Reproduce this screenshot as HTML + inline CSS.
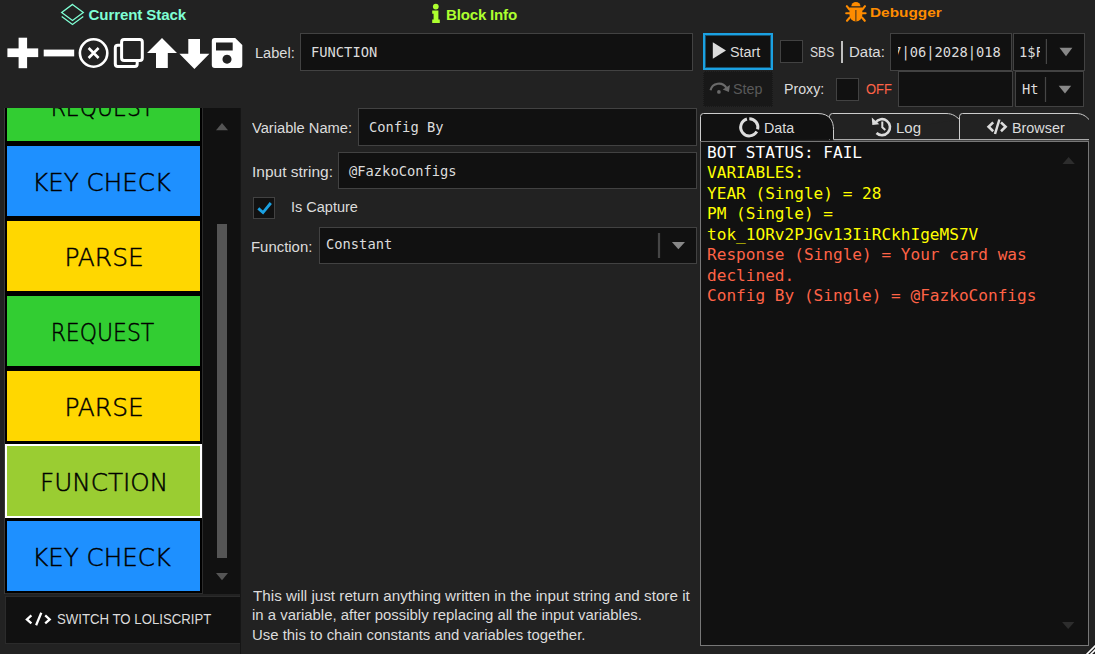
<!DOCTYPE html>
<html lang="en">
<head>
<meta charset="utf-8">
<title>Stacker</title>
<style>
html,body{margin:0;padding:0;}
body{width:1095px;height:654px;overflow:hidden;background:#222;position:relative;
  font-family:"Liberation Sans",sans-serif;color:#dcdcdc;}
.abs{position:absolute;white-space:nowrap;}
.ui{z-index:3;position:absolute;white-space:nowrap;font-family:"Liberation Sans",sans-serif;font-size:15.3px;line-height:20px;color:#dcdcdc;}
.mono{position:absolute;white-space:nowrap;font-family:"DejaVu Sans Mono","Liberation Mono",monospace;font-size:13.75px;line-height:20px;color:#dcdcdc;}
.field{position:absolute;background:#111;border:1px solid #424242;box-sizing:border-box;overflow:hidden;}
.title{position:absolute;white-space:nowrap;font-weight:bold;font-size:15.1px;line-height:20px;}
svg{position:absolute;left:0;top:0;overflow:visible;pointer-events:none;z-index:2;}
#list{position:absolute;left:4px;top:108px;width:237px;height:486px;background:#111;overflow:hidden;border-left:1px solid #3a3a3a;box-sizing:border-box;}
#listin{position:absolute;left:0;top:0;width:197px;height:485px;background:#000;overflow:hidden;border-right:1px solid #2c2c2c;border-bottom:1px solid #2c2c2c;}
.blk{position:absolute;left:0;width:193px;height:70px;border:2px solid #000;color:#000;
  font-family:"DejaVu Sans","Liberation Sans",sans-serif;font-weight:200;font-size:23.9px;line-height:70px;text-align:center;-webkit-text-stroke:0.45px #000;}
.blk span{display:inline-block;position:relative;top:2px;transform:scaleX(0.87);transform-origin:50% 50%;}
.sel{border-color:#fff;}
#log{position:absolute;left:700px;top:141px;width:389px;height:505px;box-sizing:border-box;background:#111;border:1px solid #777;overflow:hidden;}
#log div{position:absolute;left:6px;white-space:nowrap;font-family:"DejaVu Sans Mono","Liberation Mono",monospace;font-size:16.1px;line-height:20.4px;}
</style>
</head>
<body>
<div class="title" id="t1" style="left:88.5px;top:4.8px;color:#7fffd4;letter-spacing:-0.11px;">Current Stack</div>
<div class="title" id="t2" style="left:446px;top:4.8px;color:#adff2f;letter-spacing:-0.2px;">Block Info</div>
<div class="title" id="t3" style="left:870.3px;top:2.5px;color:#ff8c00;font-size:13.6px;transform:scaleX(1.13);transform-origin:0 50%;">Debugger</div>
<div class="field" style="left:300px;top:33px;width:393px;height:38px;"><div class="mono" id="lblv" style="left:10px;top:8.2px;">FUNCTION</div></div>
<div id="list"><div id="listin">
<div class="blk" style="top:-39px;background:#32cd32;"><span style="transform:scaleX(0.918);left:-0.6px;">REQUEST</span></div>
<div class="blk" style="top:36px;background:#1e90ff;"><span style="transform:scaleX(1.027);left:-1.6px;">KEY CHECK</span></div>
<div class="blk" style="top:111px;background:#ffd700;"><span style="transform:scaleX(1.04);left:0.3px;">PARSE</span></div>
<div class="blk" style="top:186px;background:#32cd32;"><span style="transform:scaleX(0.918);left:-0.6px;">REQUEST</span></div>
<div class="blk" style="top:261px;background:#ffd700;"><span style="transform:scaleX(1.04);left:0.3px;">PARSE</span></div>
<div class="blk sel" style="top:336px;background:#9acd32;"><span style="transform:scaleX(1.032);left:0.5px;">FUNCTION</span></div>
<div class="blk" style="top:411px;background:#1e90ff;"><span style="transform:scaleX(1.027);left:-1.6px;">KEY CHECK</span></div>
</div>
<div class="abs" style="left:212px;top:116px;width:10px;height:334px;background:#555;"></div>
</div>
<div class="field" style="left:5px;top:596px;width:236px;height:48px;border-color:#2b2b2b;"></div>
<div class="abs" style="left:240px;top:108px;width:1px;height:546px;background:#151515;"></div>
<div class="field" style="left:358px;top:108px;width:339px;height:38px;"><div class="mono" id="vnv" style="left:10px;top:8.2px;">Config By</div></div>
<div class="field" style="left:338px;top:152px;width:359px;height:37px;"><div class="mono" id="isv" style="left:10px;top:8.2px;">@FazkoConfigs</div></div>
<div class="field" style="left:253px;top:197px;width:22px;height:22px;"></div>
<div class="field" style="left:319px;top:227px;width:378px;height:37px;"><div class="mono" id="fnv" style="left:6px;top:6px;">Constant</div></div>
<div class="field" style="left:703px;top:33px;width:70px;height:37px;border:2px solid #1ba1e2;box-shadow:inset 0 0 0 1px rgba(27,161,226,0.45);"></div>
<div class="field" style="left:703px;top:71px;width:70px;height:36px;background:#181818;border:1px dotted #232323;"></div>
<div class="field" style="left:780px;top:40px;width:23px;height:23px;"></div>
<div class="abs" style="left:841px;top:41px;width:2px;height:22px;background:#c0c0c0;"></div>
<div class="field" style="left:890px;top:33px;width:122px;height:38px;"><div class="abs" style="left:7px;top:0;width:107px;height:36px;overflow:hidden;"><div class="mono" id="dv" style="left:-4.8px;top:8.2px;">7|06|2028|018</div></div></div>
<div class="field" style="left:1013px;top:33px;width:72px;height:38px;"><div class="mono" style="left:5px;top:8.2px;width:21px;overflow:hidden;">1$F</div></div>
<div class="field" style="left:836px;top:78px;width:23px;height:23px;"></div>
<div class="field" style="left:898px;top:71px;width:115px;height:36px;"></div>
<div class="field" style="left:1015px;top:71px;width:69px;height:36px;"><div class="mono" style="left:6px;top:7px;">Ht</div></div>
<div id="log">
<div style="top:0.5px;color:#fff;">BOT STATUS: FAIL</div>
<div style="top:21.05px;color:#ff0;">VARIABLES:</div>
<div style="top:41.6px;color:#ff0;">YEAR (Single) = 28</div>
<div style="top:62.15px;color:#ff0;">PM (Single) =</div>
<div style="top:82.7px;color:#ff0;">tok_1ORv2PJGv13IiRCkhIgeMS7V</div>
<div style="top:103.25px;color:#ff6347;">Response (Single) = Your card was</div>
<div style="top:123.8px;color:#ff6347;">declined.</div>
<div style="top:144.35px;color:#ff6347;">Config By (Single) = @FazkoConfigs</div>
</div>
<div class="ui" id="lbl" style="left:255.00px;top:42.6px;transform:scaleX(0.9548);transform-origin:0 50%;">Label:</div>
<div class="ui" id="vn" style="left:252.42px;top:117.9px;transform:scaleX(0.9598);transform-origin:0 50%;">Variable Name:</div>
<div class="ui" id="is" style="left:252.00px;top:161.9px;transform:scaleX(1.0128);transform-origin:0 50%;">Input string:</div>
<div class="ui" id="ic" style="left:290.86px;top:197.1px;transform:scaleX(0.9485);transform-origin:0 50%;">Is Capture</div>
<div class="ui" id="fn" style="left:251.30px;top:236.6px;transform:scaleX(0.9752);transform-origin:0 50%;">Function:</div>
<div class="ui" id="st" style="left:729.66px;top:41.6px;transform:scaleX(0.9354);transform-origin:0 50%;">Start</div>
<div class="ui" id="sp" style="left:733.00px;top:79px;transform:scaleX(0.9333);transform-origin:0 50%;color:#5a5a5a;">Step</div>
<div class="ui" id="sbs" style="left:809.68px;top:41.6px;transform:scaleX(0.7935);transform-origin:0 50%;">SBS</div>
<div class="ui" id="dl" style="left:849.00px;top:41.6px;transform:scaleX(0.9798);transform-origin:0 50%;">Data:</div>
<div class="ui" id="px" style="left:784.00px;top:78.6px;transform:scaleX(0.9286);transform-origin:0 50%;">Proxy:</div>
<div class="ui" id="off" style="left:866.00px;top:78.6px;transform:scaleX(0.8500);transform-origin:0 50%;color:#ff6347;">OFF</div>
<div class="ui" id="td" style="left:763.92px;top:117.9px;transform:scaleX(0.9341);transform-origin:0 50%;">Data</div>
<div class="ui" id="tl" style="left:896.35px;top:117.9px;transform:scaleX(0.9815);transform-origin:0 50%;">Log</div>
<div class="ui" id="tb" style="left:1012.42px;top:117.9px;transform:scaleX(0.9392);transform-origin:0 50%;">Browser</div>
<div class="ui" id="sw" style="left:57.00px;top:609.1px;transform:scaleX(0.8637);transform-origin:0 50%;">SWITCH TO LOLISCRIPT</div>
<div class="ui" id="d1" style="left:252.60px;top:585.6px;transform:scaleX(0.9955);transform-origin:0 50%;">This will just return anything written in the input string and store it</div>
<div class="ui" id="d2" style="left:252.45px;top:605.1px;transform:scaleX(0.9754);transform-origin:0 50%;">in a variable, after possibly replacing all the input variables.</div>
<div class="ui" id="d3" style="left:252.14px;top:624.6px;transform:scaleX(0.9754);transform-origin:0 50%;">Use this to chain constants and variables together.</div>
<svg width="1095" height="654" viewBox="0 0 1095 654">
<!-- toolbar -->
<g fill="#fff">
<rect x="18.6" y="37.7" width="8.5" height="30.5"/><rect x="7.4" y="48.4" width="30.8" height="8.7"/>
<rect x="43.7" y="49.6" width="30.5" height="6.8"/>
<polygon points="162,38 177,53 167.8,53 167.8,68 156,68 156,53 147,53"/>
<polygon points="188.3,39 200,39 200,53.7 209.4,53.7 194.4,69 179.4,53.7 188.3,53.7"/>
<path fill-rule="evenodd" d="M214.8 38H235.2L242.3 45V65a3 3 0 0 1 -3 3H214.8a3 3 0 0 1 -3 -3V41a3 3 0 0 1 3 -3ZM216 42.5V50.5H232.7V42.5ZM227 54.7a4.5 4.5 0 1 0 0.01 0Z"/>
</g>
<g fill="none" stroke="#fff">
<circle cx="93.6" cy="53" r="13.7" stroke-width="2.6"/>
<path d="M88.6 48L98.6 58M98.6 48L88.6 58" stroke-width="2.6"/>
<rect x="115.3" y="45.3" width="21.9" height="21.3" rx="2.5" stroke-width="3"/>
<rect x="121.6" y="39.5" width="20.7" height="21" rx="2.5" stroke-width="3" fill="#222"/>
</g>
<!-- title icons -->
<g fill="none" stroke="#7fffd4" stroke-width="1.3" stroke-linejoin="miter">
<polygon points="72.5,4.4 83.3,12.4 72.5,20.4 61.7,12.4"/>
<polyline points="61.7,16.4 72.5,24.4 83.3,16.4"/>
</g>
<g fill="#adff2f">
<circle cx="435.8" cy="6.6" r="2.9"/>
<path d="M432.2 10.6H438.4V19.6H439.8V23H432.2V19.6H433.6V13.8H432.2Z"/>
</g>
<g fill="#ff8c00" stroke="#ff8c00" stroke-width="2.1" stroke-linecap="round">
<path d="M851.3 6.3a4.6 4.4 0 0 1 9.2 0Z" stroke="none"/>
<path d="M849.5 7.6H862.3V15a6.4 6.4 0 0 1 -12.8 0Z" stroke="none"/>
<path d="M849.5 9.5L846.8 6.2M862.3 9.5L865 6.2M849.5 13.3H846.2M862.3 13.3H865.6M849.8 17.5L847 20.8M862 17.5L864.8 20.8" fill="none"/>
<path d="M855.9 10V21.5" stroke="#222" stroke-width="0.9" stroke-linecap="butt"/>
</g>
<!-- start/step -->
<polygon points="712.8,42.2 726,50.5 712.8,58.7" fill="#dcdcdc"/>
<g fill="none" stroke="#6a6a6a" stroke-width="2.2">
<path d="M710.5 90.3A8.7 8.7 0 0 1 726.4 87.8"/>
</g>
<circle cx="718.9" cy="91.9" r="1.85" fill="#6a6a6a"/>
<polygon points="730,85 728.9,91.9 722.7,89.5" fill="#6a6a6a"/>
<!-- checkbox tick -->
<path d="M258.3 208.4L263 212.6L270.8 203" fill="none" stroke="#1ba1e2" stroke-width="2.8"/>
<!-- combo arrows & separators -->
<g fill="#888">
<polygon points="1059.5,47.7 1072.4,47.7 1066,56.2"/>
<polygon points="1058.7,85.7 1071.2,85.7 1065,93.4"/>
<polygon points="671.9,242 685,242 678.4,249.2"/>
</g>
<g stroke="#464646" stroke-width="1.2">
<path d="M1046.4 39V64M1045.5 77V102"/><path d="M659 233V258" stroke-width="2.2"/>
</g>
<!-- scrollbar arrows -->
<g fill="#555">
<polygon points="216,130.2 228,130.2 222,123"/>
<polygon points="216,573 228,573 222,580.2"/>
<polygon points="1062.5,164 1074.8,164 1068.6,157" fill="#2d2d2d"/>
<polygon points="1062.1,622 1074.4,622 1068.2,629" fill="#2d2d2d"/>
</g>
<g stroke="#fff" stroke-width="1.6" fill="none"><path d="M1086.5 654.5L1095.5 645.5M1090.5 654.5L1095.5 649.5"/></g>
<!-- switch icon -->
<g fill="none" stroke="#fff" stroke-width="2.3">
<polyline points="31.4,615.4 26.9,619.4 31.4,623.4"/><polyline points="45.2,615.4 49.7,619.4 45.2,623.4"/><path d="M41.3 612.8L36.1 625.2"/>
</g>
<!-- tabs -->
<g fill="none" stroke="#ccc" stroke-width="1">
<path d="M959.5 140V116.5a3 3 0 0 1 3 -3H1076c7 0 10 3 13 6" />
<path d="M829.5 140V116.5a3 3 0 0 1 3 -3H946c7 0 10 3 13.5 6" fill="#222"/>
<path d="M700.5 141V116.5a3 3 0 0 1 3 -3H818c12 0 15.5 8 15.5 16V139.5" fill="#111"/>
<path d="M833.5 139.7H1089"/>
</g>
<g fill="none" stroke="#dcdcdc">
<path d="M749.3 118.7A8.6 8.6 0 0 1 757.64 129.38M756.75 131.6A8.6 8.6 0 1 1 746.93 119.03" stroke-width="3"/>
<path d="M875.5 122.5A8 8 0 1 1 876.5 133" stroke-width="2.6"/>
<path d="M882.3 121.5V127.3L885.3 130" stroke-width="2"/>
<polyline points="993.2,122.4 988.6,126.8 993.2,131.2" stroke-width="2.6"/>
<polyline points="1001,122.4 1005.6,126.8 1001,131.2" stroke-width="2.6"/>
<path d="M999.4 119.5L995 134" stroke-width="2.5"/>
</g>
<polygon points="871.8,117.5 872.3,125 879.3,124.3" fill="#dcdcdc"/>
</svg>

</body>
</html>
